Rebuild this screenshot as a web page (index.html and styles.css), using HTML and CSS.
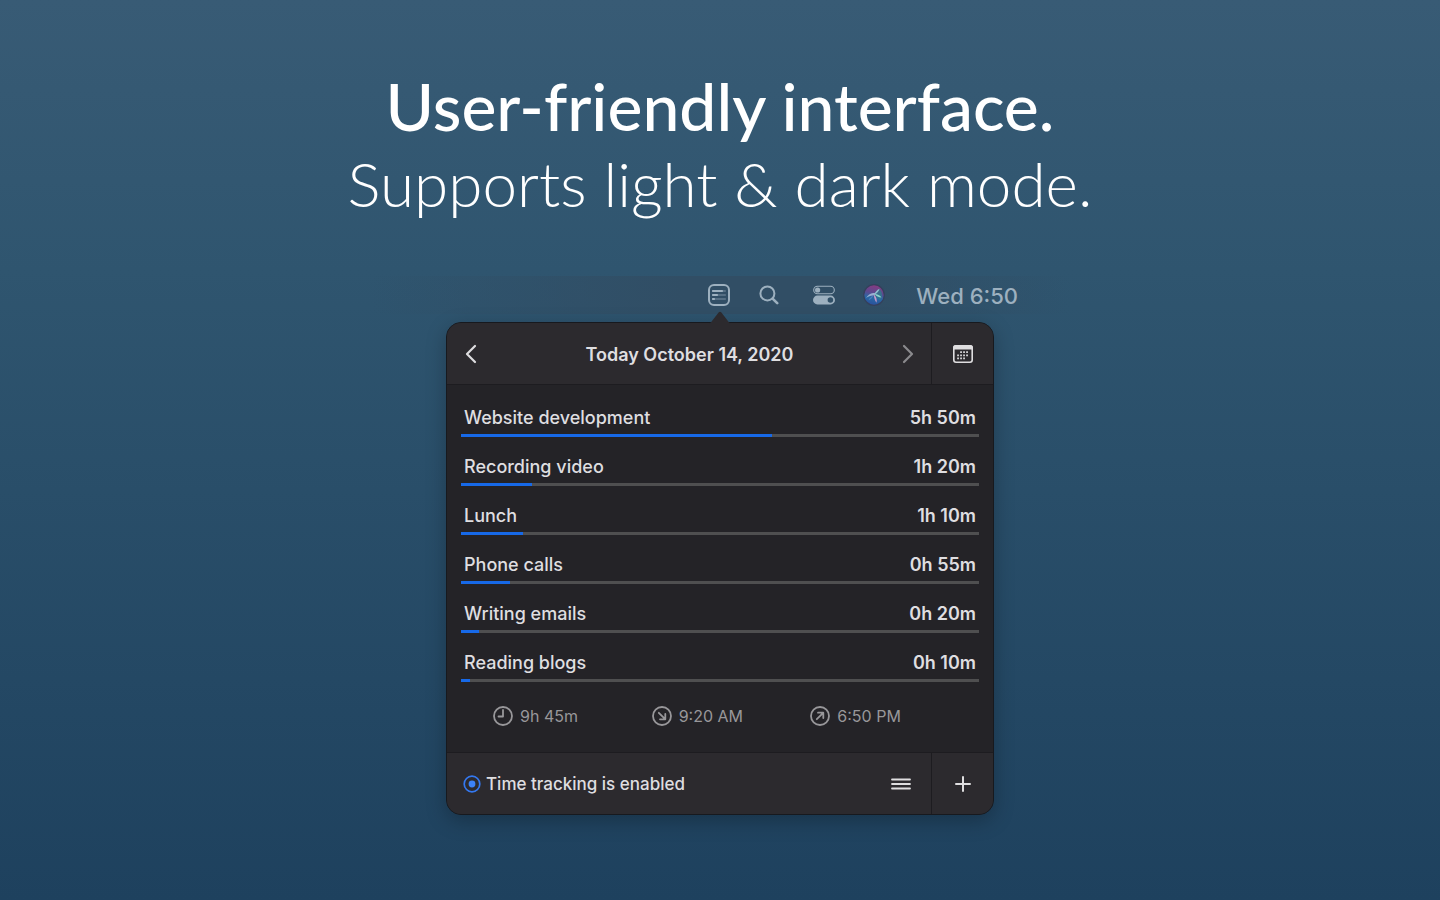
FILE: index.html
```html
<!DOCTYPE html>
<html lang="en">
<head>
    <meta charset="UTF-8">
    <meta name="viewport" content="width=device-width, initial-scale=1.0">
    <title>User-friendly interface</title>
    <link rel="stylesheet" href="styles.css">
</head>
<body>
    <header class="intro">
        <h1>User-friendly interface.</h1>
        <p>Supports light &amp; dark mode.</p>
    </header>

    <main>
        <div class="menubar">
            <svg class="menu-app" width="24" height="24" viewBox="0 0 24 24" fill="none" stroke="currentColor">
                <rect x="2" y="2" width="20" height="20" rx="5" stroke-width="2"/>
                <path d="M6 8h12M6 12h12M6 16h12" stroke-width="2.2" stroke-linecap="round" opacity=".35"/>
                <path d="M6 8h9M6 12h4M6 16h1" stroke-width="2.2" stroke-linecap="round"/>
            </svg>
            <svg class="menu-search" width="20" height="20" viewBox="0 0 20 20" fill="none" stroke="currentColor" stroke-linecap="round">
                <circle cx="8.4" cy="8.4" r="7" stroke-width="2"/>
                <path d="M13.6 13.6l4.6 4.6" stroke-width="2.6"/>
            </svg>
            <svg class="menu-control" width="22" height="20" viewBox="0 0 22 20">
                <rect x=".7" y="1.2" width="20.6" height="7.6" rx="3.8" fill="none" stroke="currentColor" stroke-width="1.1"/>
                <circle cx="4.6" cy="5" r="2.6" fill="currentColor"/>
                <rect x="0" y="10.6" width="22" height="8.8" rx="4.4" fill="currentColor"/>
                <circle cx="17.4" cy="15" r="2.8" fill="#315068"/>
            </svg>
            <svg class="menu-siri" width="22" height="22" viewBox="0 0 22 22">
                <defs>
                    <linearGradient id="siri" x1=".6" y1="0" x2=".4" y2="1">
                        <stop offset="0" stop-color="#8a3a80"/>
                        <stop offset=".4" stop-color="#5c4a90"/>
                        <stop offset=".65" stop-color="#2a68a5"/>
                        <stop offset="1" stop-color="#2a4f9c"/>
                    </linearGradient>
                </defs>
                <circle cx="11" cy="11" r="10.3" fill="url(#siri)" stroke="#35405c" stroke-width="1.2"/>
                <path d="M16.5 5c3.2 3 3.4 8 .5 11-2-1-4-3-5.5-5 2-1.500 4-3.500 5-6z" fill="#2b7f8c" opacity=".7"/>
                <path d="M3 14C5.500 10.500 8.500 8 12.500 9.500c-.6 1.500-1.500 2-3 2C7.500 11.800 5 12.600 3 14z" fill="#a9bfdc" opacity=".85"/>
                <path d="M11 10.500C12.300 8.300 14 6 16.500 4.800 15.800 7.500 14 9.800 11 10.500z" fill="#8ec4cf"/>
                <path d="M11.500 10c3 0 5.500 1.200 7 3.500-2.800-.2-5.400-1.200-7-3.500z" fill="#8fd4cc"/>
                <path d="M11 10.500c2.300 2 3.200 5 2.500 8.300C12 16.500 10.800 14 11 10.500z" fill="#c79ccb"/>
                <path d="M10.500 11.500c-1 2.200-2.600 3.900-5 4.800 1-2.200 2.600-3.800 5-4.800z" fill="#5595d0" opacity=".6"/>
            </svg>
            <span class="clock">Wed 6:50</span>
        </div>

        <section class="popover">
            <svg class="arrow" width="22" height="13" viewBox="0 0 22 13">
                <path d="M0 13C3 11 7.5 4 9.8 1.3Q11 0 12.2 1.3C14.5 4 19 11 22 13z"/>
            </svg>

            <div class="toolbar toolbar-top">
                <div class="toolbar-main">
                    <button type="button" aria-label="Previous day">
                        <svg width="12" height="20" viewBox="0 0 12 20" fill="none" stroke="#dfdee0" stroke-width="2.2" stroke-linecap="round" stroke-linejoin="round"><path d="M10 2L2 10l8 8"/></svg>
                    </button>
                    <h2>Today October 14, 2020</h2>
                    <button type="button" aria-label="Next day">
                        <svg width="12" height="20" viewBox="0 0 12 20" fill="none" stroke="#8b8a8d" stroke-width="2.2" stroke-linecap="round" stroke-linejoin="round"><path d="M2 2l8 8-8 8"/></svg>
                    </button>
                </div>
                <button type="button" class="toolbar-side" aria-label="Calendar">
                    <svg width="20" height="18" viewBox="0 0 20 18">
                        <rect x=".8" y=".8" width="18.4" height="16.4" rx="2.2" fill="none" stroke="#dfdee0" stroke-width="1.6"/>
                        <path d="M0 4.5V3a3 3 0 0 1 3-3h14a3 3 0 0 1 3 3v1.5z" fill="#dfdee0"/>
                        <path d="M7.2 7.2h9M4.2 10.3h12M4.2 13.4h9" stroke="#dfdee0" stroke-width="1.7" stroke-dasharray="1.7 1.3"/>
                    </svg>
                </button>
            </div>

            <div class="report">
                <ul class="tasks">
                    <li>
                        <span>Website development</span><b>5h 50m</b>
                        <div class="bar"><div class="fill" style="width: 60%"></div></div>
                    </li>
                    <li>
                        <span>Recording video</span><b>1h 20m</b>
                        <div class="bar"><div class="fill" style="width: 13.7%"></div></div>
                    </li>
                    <li>
                        <span>Lunch</span><b>1h 10m</b>
                        <div class="bar"><div class="fill" style="width: 12%"></div></div>
                    </li>
                    <li>
                        <span>Phone calls</span><b>0h 55m</b>
                        <div class="bar"><div class="fill" style="width: 9.4%"></div></div>
                    </li>
                    <li>
                        <span>Writing emails</span><b>0h 20m</b>
                        <div class="bar"><div class="fill" style="width: 3.4%"></div></div>
                    </li>
                    <li>
                        <span>Reading blogs</span><b>0h 10m</b>
                        <div class="bar"><div class="fill" style="width: 1.7%"></div></div>
                    </li>
                </ul>

                <div class="stats">
                    <div>
                        <svg width="20" height="20" viewBox="0 0 20 20" fill="none" stroke="currentColor" stroke-width="1.8" stroke-linecap="round" stroke-linejoin="round"><circle cx="10" cy="10" r="9"/><path d="M10 4v6.5H5.5"/></svg>
                        9h 45m
                    </div>
                    <div>
                        <svg width="20" height="20" viewBox="0 0 20 20" fill="none" stroke="currentColor" stroke-width="1.8" stroke-linecap="round" stroke-linejoin="round"><circle cx="10" cy="10" r="9"/><path d="M6.8 6.8l6.4 6.4M13.3 8v5.3H8"/></svg>
                        9:20 AM
                    </div>
                    <div>
                        <svg width="20" height="20" viewBox="0 0 20 20" fill="none" stroke="currentColor" stroke-width="1.8" stroke-linecap="round" stroke-linejoin="round"><circle cx="10" cy="10" r="9"/><path d="M6.8 13.2l6.4-6.4M8 6.7h5.3V12"/></svg>
                        6:50 PM
                    </div>
                </div>
            </div>

            <div class="toolbar toolbar-bottom">
                <div class="toolbar-main">
                    <button type="button" class="tracking">
                        <svg width="18" height="18" viewBox="0 0 18 18"><circle cx="9" cy="9" r="7.8" fill="none" stroke="#3478f0" stroke-width="1.7"/><circle cx="9" cy="9" r="3.4" fill="#3c82f7"/></svg>
                        Time tracking is enabled
                    </button>
                    <button type="button" aria-label="Menu">
                        <svg width="20" height="12" viewBox="0 0 20 12" stroke="#dfdee0" stroke-width="1.8" stroke-linecap="round"><path d="M1 1.5h18M1 6h18M1 10.5h18"/></svg>
                    </button>
                </div>
                <button type="button" class="toolbar-side" aria-label="Add">
                    <svg width="16" height="16" viewBox="0 0 16 16" stroke="#dfdee0" stroke-width="2" stroke-linecap="round"><path d="M8 1v14M1 8h14"/></svg>
                </button>
            </div>
        </section>
    </main>
</body>
</html>
```
FILE: styles.css
```css
* {
    box-sizing: border-box;
}
body {
    margin: 0;
    min-height: 100vh;
    padding: 67px 20px 40px;
    background: linear-gradient(#385b75, #2f556f 30%, #1e415e);
    color: white;
    font-family: Inter, "Liberation Sans", sans-serif;
}
.intro {
    font-family: Lato, "Open Sans", sans-serif;
    text-align: center;
}
.intro h1 {
    margin: 0;
    font-size: 66px;
    font-weight: 500;
    line-height: 78px;
}
.intro p {
    margin: 0;
    font-size: 62px;
    font-weight: 300;
    line-height: 76px;
}
main {
    max-width: 700px;
    margin: 55px auto 0;
}
.menubar {
    display: flex;
    align-items: center;
    justify-content: flex-end;
    height: 38px;
    padding-right: 52px;
    background: linear-gradient(90deg, rgba(49, 78, 101, 0), #314e65 45%, #314e65 70%, rgba(49, 78, 101, 0));
    color: #9db0bf;
}
.menu-app {
    margin-right: 28px;
}
.menu-search {
    margin-right: 34px;
}
.menu-control {
    margin-right: 28px;
}
.menu-siri {
    margin-right: 31px;
}
.clock {
    padding-top: 2px;
    font-size: 22px;
    font-weight: 500;
}
.popover {
    position: relative;
    max-width: 548px;
    margin: 8px auto 0;
    border: 1px solid #17191e;
    border-radius: 15px;
    background: #242327;
    color: #dfdee0;
    box-shadow: 0 6px 20px rgba(0, 0, 0, 0.25);
}
.arrow {
    position: absolute;
    top: -12px;
    left: 50%;
    margin-left: -11px;
    fill: #2c2a2e;
}
.toolbar {
    display: flex;
    height: 62px;
    background: #2c2a2e;
}
.toolbar-top {
    border-bottom: 1px solid #1d1c20;
    border-radius: 14px 14px 0 0;
}
.toolbar-bottom {
    border-top: 1px solid #1d1c20;
    border-radius: 0 0 14px 14px;
}
.toolbar-main {
    flex: 1;
    display: flex;
    align-items: center;
    justify-content: space-between;
    padding: 0 17px 0 18px;
}
.toolbar button {
    display: flex;
    align-items: center;
    justify-content: center;
    padding: 0;
    border: none;
    background: none;
    color: inherit;
    font: inherit;
    cursor: pointer;
}
.toolbar .toolbar-side {
    width: 62px;
    border-left: 1px solid #1d1c20;
}
.toolbar h2 {
    margin: 0;
    padding-top: 2px;
    font-size: 18px;
    font-weight: 600;
}
.toolbar .tracking {
    gap: 5px;
    font-size: 17px;
    font-weight: 450;
}
.toolbar-bottom .toolbar-main {
    padding: 0 20px 0 16px;
}
.report {
    padding: 20px 14px 24px;
}
.tasks {
    display: grid;
    gap: 17px;
    margin: 0;
    padding: 0;
    list-style: none;
}
.tasks li {
    display: flex;
    flex-wrap: wrap;
    justify-content: space-between;
    font-size: 18px;
    line-height: 26px;
}
.tasks span {
    padding-left: 3px;
    font-weight: 450;
}
.tasks b {
    padding-right: 3px;
    font-weight: 600;
}
.bar {
    width: 100%;
    height: 3px;
    margin-top: 3px;
    background: #4f4f50;
}
.fill {
    height: 3px;
    background: #1769e8;
}
.stats {
    display: grid;
    grid-template-columns: repeat(3, 1fr);
    margin-top: 22px;
    padding: 0 10px 0 32px;
    color: #98979a;
    font-size: 16px;
    line-height: 24px;
}
.stats div {
    display: flex;
    align-items: center;
    gap: 7px;
}
```
